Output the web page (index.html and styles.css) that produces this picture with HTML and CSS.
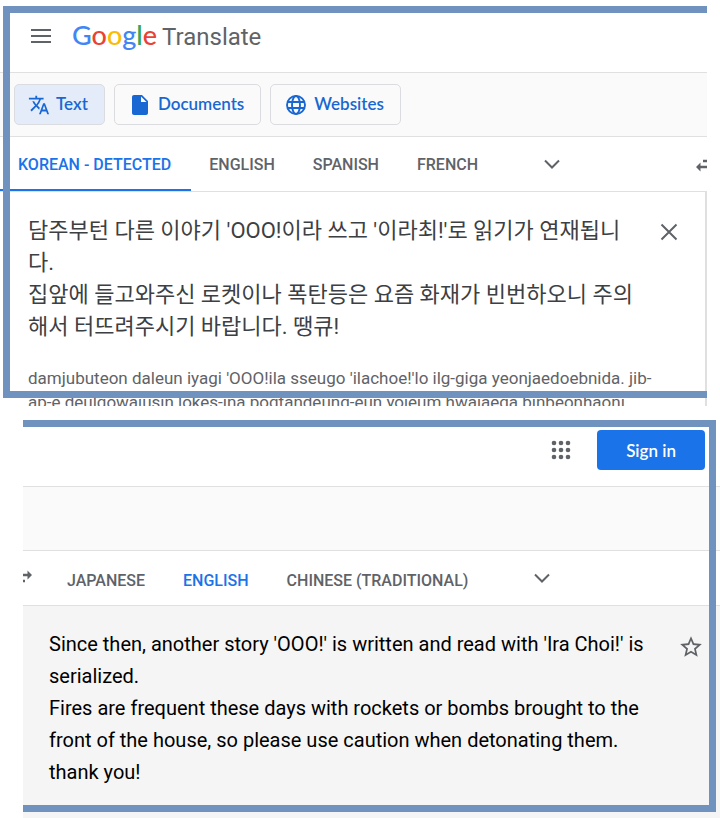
FILE: index.html
```html
<!DOCTYPE html>
<html lang="en">

<head>
    <meta charset="UTF-8">
    <meta name="viewport" content="width=device-width, initial-scale=1.0">
    <title>Google Translate</title>
    <link rel="stylesheet" href="styles.css">
</head>

<body>
    <section class="panel source">
        <header class="header">
            <button class="icon-btn" aria-label="Main menu">
                <svg width="22" height="16" viewBox="0 0 22 16"><path fill="#5f6368" d="M1 1h20v2H1zM1 7h20v2H1zM1 13h20v2H1z"/></svg>
            </button>
            <a class="logo" href="#">
                <span class="google"><span class="blue">G</span><span class="red">o</span><span class="yellow">o</span><span class="blue">g</span><span class="green">l</span><span class="red">e</span></span>
                <span class="product">Translate</span>
            </a>
        </header>

        <nav class="modes">
            <button class="mode selected">
                <svg width="22" height="22" viewBox="0 0 24 24"><path fill="currentColor" d="M12.87 15.07l-2.54-2.51.03-.03A17.52 17.52 0 0 0 14.07 6H17V4h-7V2H8v2H1v2h11.17C11.5 7.92 10.44 9.75 9 11.35 8.07 10.32 7.3 9.19 6.69 8h-2c.73 1.63 1.73 3.17 2.98 4.56l-5.09 5.02L4 19l5-5 3.11 3.11.76-2.04zM18.5 10h-2L12 22h2l1.12-3h4.75L21 22h2l-4.5-12zm-2.62 7l1.62-4.33L19.12 17h-3.24z"/></svg>
                <span>Text</span>
            </button>
            <button class="mode">
                <svg width="24" height="24" viewBox="0 0 24 24"><path fill="currentColor" d="M6 2c-1.1 0-2 .9-2 2v16c0 1.1.9 2 2 2h12c1.1 0 2-.9 2-2V8l-6-6H6zm7 7V3.5L18.5 9H13z"/></svg>
                <span>Documents</span>
            </button>
            <button class="mode">
                <svg width="24" height="24" viewBox="0 0 24 24" fill="none" stroke="currentColor" stroke-width="1.9"><circle cx="12" cy="12" r="9"/><ellipse cx="12" cy="12" rx="4" ry="9"/><path d="M3.5 9h17M3.5 15h17"/></svg>
                <span>Websites</span>
            </button>
        </nav>

        <div class="tabs">
            <button class="tab active">KOREAN - DETECTED</button>
            <button class="tab">ENGLISH</button>
            <button class="tab">SPANISH</button>
            <button class="tab">FRENCH</button>
            <button class="icon-btn more" aria-label="More source languages">
                <svg width="24" height="24" viewBox="0 0 24 24"><path fill="none" stroke="#5f6368" stroke-width="2" d="M5 8.5l7 7 7-7"/></svg>
            </button>
            <button class="icon-btn swap" aria-label="Swap languages">
                <svg width="24" height="24" viewBox="0 0 24 24"><path fill="#5f6368" d="M7.5 10.5L3 15l4.5 4.5v-3.3H14v-2.4H7.5zM21 9l-4.5-4.5v3.3H10v2.4h6.5v3.3z"/></svg>
            </button>
        </div>

        <div class="content">
            <div class="text">
                <textarea class="input" rows="4" lang="ko" aria-label="Source text" spellcheck="false">담주부턴 다른 이야기 'OOO!이라 쓰고 '이라최!'로 읽기가 연재됩니
다.
집앞에 들고와주신 로켓이나 폭탄등은 요즘 화재가 빈번하오니 주의
해서 터뜨려주시기 바랍니다. 땡큐!</textarea>
                <div class="romanized">damjubuteon daleun iyagi 'OOO!ila sseugo 'ilachoe!'lo ilg-giga yeonjaedoebnida. jib-<br>ap-e deulgowajusin lokes-ina pogtandeung-eun yojeum hwajaega binbeonhaoni</div>
            </div>
            <button class="icon-btn clear" aria-label="Clear source text">
                <svg width="24" height="24" viewBox="0 0 24 24"><path fill="none" stroke="#5f6368" stroke-width="2" d="M4.5 4.5l15 15M19.5 4.5l-15 15"/></svg>
            </button>
        </div>
        <div class="frame"></div>
    </section>

    <section class="panel target">
        <header class="header">
            <button class="icon-btn" aria-label="Google apps">
                <svg width="20" height="20" viewBox="0 0 20 20" fill="#5f6368"><circle cx="3" cy="3" r="2.3"/><circle cx="10" cy="3" r="2.3"/><circle cx="17" cy="3" r="2.3"/><circle cx="3" cy="10" r="2.3"/><circle cx="10" cy="10" r="2.3"/><circle cx="17" cy="10" r="2.3"/><circle cx="3" cy="17" r="2.3"/><circle cx="10" cy="17" r="2.3"/><circle cx="17" cy="17" r="2.3"/></svg>
            </button>
            <button class="sign-in">Sign in</button>
        </header>

        <div class="modes"></div>

        <div class="tabs">
            <button class="icon-btn swap" aria-label="Swap languages">
                <svg width="24" height="24" viewBox="0 0 24 24"><path fill="#5f6368" d="M7.5 10.5L3 15l4.5 4.5v-3.3H14v-2.4H7.5zM21 9l-4.5-4.5v3.3H10v2.4h6.5v3.3z"/></svg>
            </button>
            <button class="tab">JAPANESE</button>
            <button class="tab active">ENGLISH</button>
            <button class="tab">CHINESE (TRADITIONAL)</button>
            <button class="icon-btn more" aria-label="More target languages">
                <svg width="24" height="24" viewBox="0 0 24 24"><path fill="none" stroke="#5f6368" stroke-width="2" d="M5 8.5l7 7 7-7"/></svg>
            </button>
        </div>

        <div class="content">
            <p class="output">Since then, another story 'OOO!' is written and read with 'Ira Choi!' is<br>serialized.<br>Fires are frequent these days with rockets or bombs brought to the<br>front of the house, so please use caution when detonating them.<br>thank you!</p>
            <button class="icon-btn star" aria-label="Save translation">
                <svg width="26" height="26" viewBox="0 0 24 24"><path fill="#5f6368" d="M22 9.24l-7.19-.62L12 2 9.19 8.63 2 9.24l5.46 4.73L5.82 21 12 17.27 18.18 21l-1.63-7.03L22 9.24zM12 15.4l-3.76 2.27 1-4.28-3.32-2.88 4.38-.38L12 6.1l1.71 4.04 4.38.38-3.32 2.88 1 4.28L12 15.4z"/></svg>
            </button>
        </div>
        <div class="frame"></div>
    </section>
</body>

</html>
```

FILE: styles.css
```css
* {
    box-sizing: border-box;
}

body {
    margin: 0;
    background-color: #fff;
    font-family: Roboto, "Noto Sans CJK KR", sans-serif;
    color: #5f6368;
}

button {
    margin: 0;
    padding: 0;
    border: none;
    background: none;
    color: inherit;
    font-family: inherit;
    cursor: pointer;
}

svg {
    display: block;
}

.panel {
    position: relative;
    overflow: hidden;
}

.source {
    margin-right: 13px;
}

.target {
    margin-left: 23px;
}

/* blue outline lies over the panel */
.frame {
    position: absolute;
    border: 7px solid #7092be;
    pointer-events: none;
}

.source .frame {
    top: 6px;
    right: 0;
    bottom: 8px;
    left: 3px;
    border-right: none;
}

.target .frame {
    top: 14px;
    right: 4px;
    bottom: 6px;
    left: 0;
    border-left: none;
}

.header {
    display: flex;
    align-items: center;
    border-bottom: 1px solid #e0e0e0;
}

.source .header {
    height: 73px;
    padding-left: 30px;
    gap: 20px;
}

.target .header {
    justify-content: flex-end;
    padding: 24px 15px 16px;
    gap: 26px;
}

.logo {
    display: flex;
    align-items: baseline;
    gap: 5px;
    color: #5f6368;
    text-decoration: none;
    line-height: 36px;
}

.google {
    font-family: Lato, sans-serif;
    font-size: 27px;
    font-weight: 500;
}

.product {
    font-size: 24px;
}

.blue {
    color: #4285f4;
}

.red {
    color: #ea4335;
}

.yellow {
    color: #fbbc05;
}

.green {
    color: #34a853;
}

.modes {
    display: flex;
    align-items: center;
    gap: 9px;
    height: 64px;
    padding-left: 14px;
    background-color: #fafafa;
    border-bottom: 1px solid #e0e0e0;
}

.mode {
    display: flex;
    align-items: center;
    gap: 6px;
    height: 41px;
    padding: 0 16px 0 13px;
    border: 1px solid #dadce0;
    border-radius: 5px;
    color: #1967d2;
    font-family: Lato, sans-serif;
    font-size: 17px;
    font-weight: 600;
}

.mode span {
    padding-bottom: 2px;
}

.selected {
    background-color: #e4ecf9;
}

.tabs {
    display: flex;
    align-items: center;
    height: 55px;
    border-bottom: 1px solid #e0e0e0;
}

.tab {
    height: 54px;
    padding: 0 20px 0 18px;
    font-size: 16px;
    font-weight: 500;
    white-space: nowrap;
}

.target .tab {
    padding-top: 4px;
}

.active {
    color: #1a73e8;
}

.source .active {
    border-bottom: 2px solid #1a73e8;
    padding-top: 2px;
}

.icon-btn {
    flex: none;
}

.more {
    margin-left: 42px;
}

.source .swap {
    margin-left: auto;
    margin-right: -10px;
}

.target .swap {
    margin-left: -12px;
    margin-right: 14px;
}

.content {
    display: flex;
    align-items: flex-start;
}

.source .content {
    padding: 23px 24px 0 28px;
    border-right: 2px solid #e0e0e0;
}

.text {
    flex: 1;
}

.input {
    display: block;
    width: 100%;
    padding: 0;
    border: none;
    outline: none;
    resize: none;
    overflow: hidden;
    background: none;
    color: #3c4043;
    font-family: Roboto, "Noto Sans CJK KR", sans-serif;
    font-size: 22px;
    line-height: 32px;
}

/* only the first line and the top of the second stay in view */
.romanized {
    height: 40px;
    margin-top: 23px;
    overflow: hidden;
    font-size: 17px;
    line-height: 24px;
    white-space: nowrap;
}

.clear {
    margin-top: 5px;
}

.target .content {
    justify-content: space-between;
    padding: 22px 16px 30px 26px;
    background-color: #f5f5f5;
}

.output {
    margin: 0;
    color: #000;
    font-size: 20px;
    line-height: 32px;
    white-space: nowrap;
}

.star {
    margin-top: 6px;
}

.sign-in {
    height: 40px;
    padding: 0 29px;
    border-radius: 4px;
    background-color: #1a73e8;
    color: #fff;
    font-family: Lato, sans-serif;
    font-size: 17px;
    font-weight: 600;
}
```
